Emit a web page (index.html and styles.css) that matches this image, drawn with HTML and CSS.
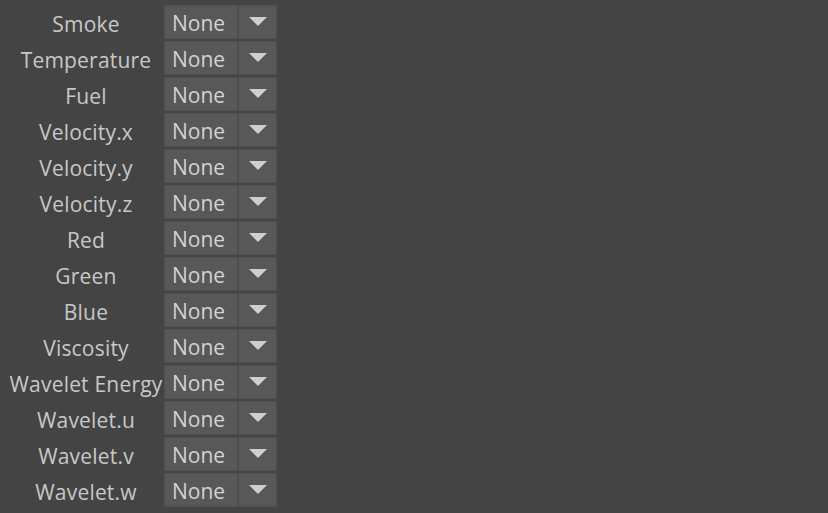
FILE: index.html
```html
<!DOCTYPE html>
<html>
<head>
<meta charset="utf-8">
<link rel="stylesheet" href="styles.css">
</head>
<body>
<div class="panel">
  <div class="row"><span class="label">Smoke</span><div class="combo"><span class="value">None</span><span class="drop"><span class="arrow"></span></span></div></div>
  <div class="row"><span class="label">Temperature</span><div class="combo"><span class="value">None</span><span class="drop"><span class="arrow"></span></span></div></div>
  <div class="row"><span class="label">Fuel</span><div class="combo"><span class="value">None</span><span class="drop"><span class="arrow"></span></span></div></div>
  <div class="row"><span class="label">Velocity.x</span><div class="combo"><span class="value">None</span><span class="drop"><span class="arrow"></span></span></div></div>
  <div class="row"><span class="label">Velocity.y</span><div class="combo"><span class="value">None</span><span class="drop"><span class="arrow"></span></span></div></div>
  <div class="row"><span class="label">Velocity.z</span><div class="combo"><span class="value">None</span><span class="drop"><span class="arrow"></span></span></div></div>
  <div class="row"><span class="label">Red</span><div class="combo"><span class="value">None</span><span class="drop"><span class="arrow"></span></span></div></div>
  <div class="row"><span class="label">Green</span><div class="combo"><span class="value">None</span><span class="drop"><span class="arrow"></span></span></div></div>
  <div class="row"><span class="label">Blue</span><div class="combo"><span class="value">None</span><span class="drop"><span class="arrow"></span></span></div></div>
  <div class="row"><span class="label">Viscosity</span><div class="combo"><span class="value">None</span><span class="drop"><span class="arrow"></span></span></div></div>
  <div class="row"><span class="label">Wavelet Energy</span><div class="combo"><span class="value">None</span><span class="drop"><span class="arrow"></span></span></div></div>
  <div class="row"><span class="label">Wavelet.u</span><div class="combo"><span class="value">None</span><span class="drop"><span class="arrow"></span></span></div></div>
  <div class="row"><span class="label">Wavelet.v</span><div class="combo"><span class="value">None</span><span class="drop"><span class="arrow"></span></span></div></div>
  <div class="row"><span class="label">Wavelet.w</span><div class="combo"><span class="value">None</span><span class="drop"><span class="arrow"></span></span></div></div>
</div>
</body>
</html>
```
FILE: styles.css
```css
html, body {
  margin: 0;
  padding: 0;
  background: #444444;
  height: 100%;
}
body {
  font-family: "Open Sans", "DejaVu Sans", sans-serif;
  font-size: 21px;
  color: #c8c8c8;
}
.panel {
  display: flex;
  flex-direction: column;
  gap: 2px;
  padding: 5px 0 0 8px;
}
.row {
  display: flex;
  height: 34px;
  align-items: stretch;
}
.label {
  width: 156px;
  text-align: center;
  line-height: 34px;
  padding-top: 2px;
  box-sizing: border-box;
  white-space: nowrap;
  letter-spacing: 0.2px;
}
.combo {
  display: flex;
  width: 113px;
}
.value {
  width: 74px;
  box-sizing: border-box;
  background: #585858;
  border: 1px solid #4f4f4f;
  padding: 3px 0 0 7px;
  line-height: 29px;
  color: #d2d2d2;
}
.drop {
  width: 39px;
  box-sizing: border-box;
  background: #585858;
  border: 1px solid #4f4f4f;
  border-left-color: #4a4a4a;
  display: flex;
  align-items: center;
  justify-content: center;
}
.arrow {
  width: 0;
  height: 0;
  border-left: 9px solid transparent;
  border-right: 9px solid transparent;
  border-top: 9px solid #cfcfcf;
  margin-top: -1px;
}
```
